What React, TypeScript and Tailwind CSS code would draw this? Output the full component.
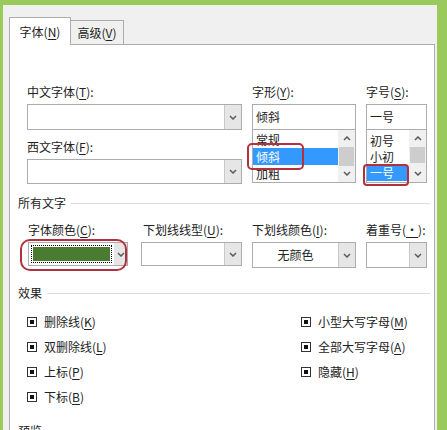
import React from 'react';

const font = { fontFamily: '"Noto Sans CJK SC", "Noto Sans", sans-serif' };

function Chevron({ up = false }: { up?: boolean }) {
  return (
    <svg width="8" height="5" viewBox="0 0 8 5" className="block">
      <path d={up ? 'M1 4 L4 1 L7 4' : 'M1 1 L4 4 L7 1'} fill="none" stroke="#5a5a5a" strokeWidth="1.5" />
    </svg>
  );
}

// letter with access-key underline, e.g. 字体(N)
function Label({ text, k, colon = true }: { text: string; k: string; colon?: boolean }) {
  return (
    <span>
      {text}(<span className="underline underline-offset-2">{k}</span>){colon ? ':' : ''}
    </span>
  );
}

function ArrowBox() {
  return (
    <div className="w-[17px] h-full flex items-center justify-center bg-[#e6e6e6] border-l border-[#c8c8c8]">
      <Chevron />
    </div>
  );
}

function Combo({ h, children, center = false }: { h: string; children?: React.ReactNode; center?: boolean }) {
  return (
    <div className={`${h} w-full flex border border-[#acacac] bg-white`}>
      <div className={`flex-1 flex items-center ${center ? 'justify-center' : 'pl-[3px]'}`}>{children}</div>
      <ArrowBox />
    </div>
  );
}

function Scrollbar({ thumb }: { thumb: string }) {
  return (
    <div className="w-[17px] h-full flex flex-col bg-[#f0f0f0]">
      <div className="h-[17px] flex items-center justify-center">
        <Chevron up />
      </div>
      <div className="flex-1 flex flex-col">
        <div className={`${thumb} mx-[1px] bg-[#cdcdcd]`} />
      </div>
      <div className="h-[17px] flex items-center justify-center">
        <Chevron />
      </div>
    </div>
  );
}

function Heading({ title }: { title: string }) {
  return (
    <div className="h-[14px] leading-[14px] flex items-center">
      <span>{title}</span>
      <div className="flex-1 h-px bg-[#dcdcdc] ml-[5px] mr-[4px]" />
    </div>
  );
}

function Check({ text, k }: { text: string; k: string }) {
  return (
    <div className="h-[25px] flex items-center">
      <div className="w-[10px] h-[10px] border border-[#333] flex items-center justify-center">
        <div className="w-[4px] h-[4px] bg-[#111]" />
      </div>
      <span className="ml-[7px] leading-[14px]">
        <Label text={text} k={k} colon={false} />
      </span>
    </div>
  );
}

export default function App() {
  return (
    <div className="w-[447px] h-[430px] overflow-hidden bg-[#9bca5c] relative text-[12px] text-[#222]" style={font}>
      <div className="ml-[3px] mt-[5px] w-[434px] h-[425px] bg-[#f0f0f0] pl-[6px] pt-[12px] flex flex-col">
        {/* tabs */}
        <div className="h-[27px] flex items-end">
          <div className="relative z-10 w-[62px] h-[28px] -mb-px bg-white border border-b-0 border-[#acacac] flex items-center justify-center">
            <Label text="字体" k="N" colon={false} />
          </div>
          <div className="w-[53px] h-[24px] bg-[#f0f0f0] border border-l-0 border-b-0 border-[#acacac] flex items-center justify-center">
            <Label text="高级" k="V" colon={false} />
          </div>
        </div>

        {/* panel */}
        <div className="w-[426px] flex-1 bg-white border border-b-0 border-[#acacac] pl-[8px] pt-[40px]">
          <div className="pl-[9px] flex gap-[10px]">
            <div className="w-[215px]">
              <div className="h-[19px] leading-[14px]"><Label text="中文字体" k="T" /></div>
              <Combo h="h-[26px]" />
              <div className="h-[19px] leading-[14px] mt-[10px]"><Label text="西文字体" k="F" /></div>
              <Combo h="h-[25px]" />
            </div>
            <div className="w-[104px]">
              <div className="h-[19px] leading-[14px]"><Label text="字形" k="Y" /></div>
              <div className="h-[26px] border border-[#acacac] flex items-center pl-[3px]">倾斜</div>
              <div className="h-[53px] border border-t-0 border-[#acacac] flex overflow-hidden">
                <div className="flex-1 pt-[1px]">
                  <div className="h-[17px] leading-[17px] pl-[3px]">常规</div>
                  <div className="h-[17px] leading-[17px] pl-[3px] bg-[#3399ff] text-white">倾斜</div>
                  <div className="h-[17px] leading-[17px] pl-[3px]">加粗</div>
                </div>
                <Scrollbar thumb="h-[19px]" />
              </div>
            </div>
            <div className="w-[61px]">
              <div className="h-[19px] leading-[14px]"><Label text="字号" k="S" /></div>
              <div className="h-[26px] border border-[#acacac] flex items-center pl-[3px]">一号</div>
              <div className="h-[53px] border border-t-0 border-[#acacac] flex overflow-hidden">
                <div className="flex-1 pt-[3px]">
                  <div className="h-[16px] leading-[16px] pl-[3px]">初号</div>
                  <div className="h-[16px] leading-[16px] pl-[3px]">小初</div>
                  <div className="h-[16px] leading-[16px] pl-[3px] mr-[2px] bg-[#3399ff] text-white">一号</div>
                </div>
                <Scrollbar thumb="h-[16px]" />
              </div>
            </div>
          </div>

          <div className="mt-[12px]">
            <Heading title="所有文字" />
          </div>

          <div className="pl-[10px] mt-[13px] flex">
            <div className="w-[100px]">
              <div className="h-[19px] leading-[14px]"><Label text="字体颜色" k="C" /></div>
              <div className="h-[24px] flex border border-[#acacac] bg-white">
                <div className="flex-1 p-[2px]">
                  <div className="h-full border border-dotted border-black p-[1px]">
                    <div className="h-full bg-[#4b7b30]" />
                  </div>
                </div>
                <div className="w-[13px] flex items-center justify-center bg-[#e6e6e6]">
                  <Chevron />
                </div>
              </div>
            </div>
            <div className="w-[101px] ml-[13px]">
              <div className="h-[19px] leading-[14px] pl-[2px]"><Label text="下划线线型" k="U" /></div>
              <Combo h="h-[24px]" />
            </div>
            <div className="w-[104px] ml-[10px]">
              <div className="h-[19px] leading-[14px]"><Label text="下划线颜色" k="I" /></div>
              <Combo h="h-[26px]" center>无颜色</Combo>
            </div>
            <div className="w-[61px] ml-[10px]">
              <div className="h-[19px] leading-[14px]"><Label text="着重号" k="·" /></div>
              <Combo h="h-[26px]" />
            </div>
          </div>

          <div className="mt-[18px]">
            <Heading title="效果" />
          </div>

          <div className="pl-[9px] mt-[9px] flex">
            <div className="w-[274px]">
              <Check text="删除线" k="K" />
              <Check text="双删除线" k="L" />
              <Check text="上标" k="P" />
              <Check text="下标" k="B" />
            </div>
            <div>
              <Check text="小型大写字母" k="M" />
              <Check text="全部大写字母" k="A" />
              <Check text="隐藏" k="H" />
            </div>
          </div>

          <div className="mt-[15px]">
            <Heading title="预览" />
          </div>
        </div>
      </div>

      {/* red annotation outlines */}
      <div className="absolute left-[247px] top-[143px] w-[57px] h-[27px] rounded-[5px] border-2 border-[#b3303e]" />
      <div className="absolute left-[363px] top-[164px] w-[46px] h-[22px] rounded-[4px] border-2 border-[#b3303e]" />
      <div className="absolute left-[20px] top-[239px] w-[107px] h-[32px] rounded-[10px] border-2 border-[#b3303e]" />
    </div>
  );
}
